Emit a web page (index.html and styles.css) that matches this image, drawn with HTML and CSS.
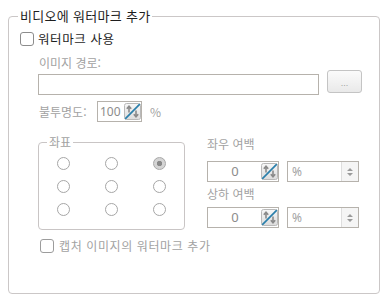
FILE: index.html
```html
<!DOCTYPE html>
<html lang="ko">
<head>
<meta charset="utf-8">
<link rel="stylesheet" href="styles.css">
</head>
<body>
<fieldset class="group">
  <legend class="group-title">비디오에 워터마크 추가</legend>
  <div class="check-row top">
    <span class="checkbox"></span>
    <span class="check-label dark">워터마크 사용</span>
  </div>
  <div class="indent">
    <div class="caption path-caption">이미지 경로:</div>
    <div class="path-row">
      <div class="textbox"></div>
      <div class="btn">...</div>
    </div>
    <div class="opacity-row">
      <span class="caption opacity-caption">불투명도:</span>
      <div class="spin narrow">
        <span class="val left">100</span>
        <svg class="spin-icon" width="17" height="17" viewBox="0 0 17 17">
          <defs><linearGradient id="g1" x1="0" y1="0" x2="0" y2="1"><stop offset="0" stop-color="#f7f7f7"/><stop offset="1" stop-color="#dcdcdc"/></linearGradient></defs>
          <rect x="0.5" y="0.5" width="16" height="16" rx="2" fill="url(#g1)" stroke="#b9b9b9"/>
          <path d="M5 9.5V3.5M2.8 5.8L5 3.3L7.2 5.8" fill="none" stroke="#8a8a8a" stroke-width="1.6"/>
          <path d="M12 7.5V13.5M9.8 11.2L12 13.7L14.2 11.2" fill="none" stroke="#8a8a8a" stroke-width="1.6"/>
          <path d="M1.2 15.8L15.8 1.2" stroke="#2a7fab" stroke-width="1.7"/>
        </svg>
      </div>
      <span class="caption pct">%</span>
    </div>
    <div class="pos-row">
      <fieldset class="coords">
        <legend class="coords-title">좌표</legend>
        <div class="grid">
          <span class="radio"></span><span class="radio"></span><span class="radio checked"></span>
          <span class="radio"></span><span class="radio"></span><span class="radio"></span>
          <span class="radio"></span><span class="radio"></span><span class="radio"></span>
        </div>
      </fieldset>
      <div class="margins">
        <div class="caption m-caption first">좌우 여백</div>
        <div class="m-row first-row">
          <div class="spin wide">
            <span class="val center">0</span>
            <svg class="spin-icon" width="17" height="17" viewBox="0 0 17 17">
              <defs><linearGradient id="g2" x1="0" y1="0" x2="0" y2="1"><stop offset="0" stop-color="#f7f7f7"/><stop offset="1" stop-color="#dcdcdc"/></linearGradient></defs>
              <rect x="0.5" y="0.5" width="16" height="16" rx="2" fill="url(#g2)" stroke="#b9b9b9"/>
              <path d="M5 9.5V3.5M2.8 5.8L5 3.3L7.2 5.8" fill="none" stroke="#8a8a8a" stroke-width="1.6"/>
              <path d="M12 7.5V13.5M9.8 11.2L12 13.7L14.2 11.2" fill="none" stroke="#8a8a8a" stroke-width="1.6"/>
              <path d="M1.2 15.8L15.8 1.2" stroke="#2a7fab" stroke-width="1.7"/>
            </svg>
          </div>
          <div class="combo">
            <span class="combo-text">%</span>
            <span class="combo-btn">
              <svg width="8" height="10" viewBox="0 0 8 10"><path d="M1 4L4 1L7 4Z M1 6L4 9L7 6Z" fill="#9a9a9a"/></svg>
            </span>
          </div>
        </div>
        <div class="caption m-caption second">상하 여백</div>
        <div class="m-row second-row">
          <div class="spin wide">
            <span class="val center">0</span>
            <svg class="spin-icon" width="17" height="17" viewBox="0 0 17 17">
              <defs><linearGradient id="g3" x1="0" y1="0" x2="0" y2="1"><stop offset="0" stop-color="#f7f7f7"/><stop offset="1" stop-color="#dcdcdc"/></linearGradient></defs>
              <rect x="0.5" y="0.5" width="16" height="16" rx="2" fill="url(#g3)" stroke="#b9b9b9"/>
              <path d="M5 9.5V3.5M2.8 5.8L5 3.3L7.2 5.8" fill="none" stroke="#8a8a8a" stroke-width="1.6"/>
              <path d="M12 7.5V13.5M9.8 11.2L12 13.7L14.2 11.2" fill="none" stroke="#8a8a8a" stroke-width="1.6"/>
              <path d="M1.2 15.8L15.8 1.2" stroke="#2a7fab" stroke-width="1.7"/>
            </svg>
          </div>
          <div class="combo">
            <span class="combo-text">%</span>
            <span class="combo-btn">
              <svg width="8" height="10" viewBox="0 0 8 10"><path d="M1 4L4 1L7 4Z M1 6L4 9L7 6Z" fill="#9a9a9a"/></svg>
            </span>
          </div>
        </div>
      </div>
    </div>
  </div>
  <div class="check-row bottom">
    <span class="checkbox light"></span>
    <span class="check-label gray">캡처 이미지의 워터마크 추가</span>
  </div>
</fieldset>
</body>
</html>
```

FILE: styles.css
```css
html, body {
  margin: 0;
  padding: 0;
  background: #ffffff;
}
body {
  width: 387px;
  height: 302px;
  padding: 8px 0 0 8px;
  box-sizing: border-box;
  font-family: "Noto Sans CJK KR", "Noto Sans", sans-serif;
  font-size: 12px;
  overflow: hidden;
}
.group {
  margin: 0;
  width: 372px;
  height: 286px;
  box-sizing: border-box;
  border: 1px solid #cbc7c7;
  border-radius: 4px;
  padding: 0 0 0 11px;
  min-width: 0;
}
.group-title {
  font-size: 13px;
  line-height: 16px;
  color: #1e1e1e;
  padding: 0 2px;
  margin-left: -2px;
  letter-spacing: 0.3px;
}
.check-row {
  display: flex;
  align-items: center;
  height: 14px;
}
.check-row.top {
  margin-top: 8px;
}
.check-row.bottom {
  margin-top: 9px;
  margin-left: 20px;
}
.checkbox {
  width: 14px;
  height: 14px;
  box-sizing: border-box;
  border: 1px solid #8c8c8c;
  border-radius: 3px;
  background: #ffffff;
  flex: none;
}
.checkbox.light {
  border-color: #9c9c9c;
}
.check-label {
  margin-left: 5px;
  line-height: 14px;
  font-size: 12px;
  letter-spacing: 0.6px;
}
.check-label.dark {
  color: #1e1e1e;
  font-size: 12.5px;
  margin-left: 4px;
}
.check-label.gray {
  color: #a2a2a2;
}
.indent {
  margin-left: 18px;
}
.caption {
  color: #a2a2a2;
  font-size: 12px;
  line-height: 14px;
}
.path-caption {
  margin-top: 10px;
  height: 14px;
  padding-left: 1px;
}
.path-row {
  display: flex;
  align-items: flex-start;
}
.textbox {
  margin-top: 4px;
  width: 281px;
  height: 21px;
  box-sizing: border-box;
  border: 1px solid #b6b2ac;
  background: #ffffff;
}
.btn {
  margin-left: 8px;
  width: 35px;
  height: 23px;
  box-sizing: border-box;
  border: 1px solid #c4c4c4;
  border-radius: 3px;
  background: linear-gradient(#fbfbfb, #e9e9e9);
  color: #a0a0a0;
  font-family: "Liberation Sans", sans-serif;
  font-size: 9px;
  line-height: 21px;
  text-align: center;
  padding-top: 2px;
}
.opacity-row {
  display: flex;
  align-items: center;
  margin-top: 6px;
  height: 21px;
}
.opacity-caption {
  width: 59px;
  padding-left: 1px;
  box-sizing: border-box;
}
.pct {
  margin-left: 8px;
}
.spin {
  display: flex;
  align-items: center;
  height: 21px;
  box-sizing: border-box;
  border: 1px solid #b6b2ac;
  background: #ffffff;
}
.spin.narrow {
  width: 45px;
}
.spin.wide {
  width: 72px;
}
.val {
  font-family: "Noto Sans", sans-serif;
  font-size: 12px;
  line-height: 19px;
  color: #8c8c8c;
}
.val.left {
  padding-left: 2px;
}
.val.center {
  flex: 1;
  text-align: center;
  padding-left: 1px;
  font-size: 13px;
}
.spin-icon {
  display: block;
  margin-left: auto;
  margin-right: 0;
  flex: none;
}
.pos-row {
  display: flex;
  align-items: flex-start;
  margin-top: 12px;
}
.coords {
  margin: 0;
  width: 147px;
  box-sizing: border-box;
  border: 1px solid #c9c5c5;
  border-radius: 4px;
  padding: 2px 0 8px 0;
  min-width: 0;
}
.coords-title {
  font-size: 12px;
  line-height: 16px;
  color: #a2a2a2;
  padding: 0 2px;
  margin-left: 8px;
}
.grid {
  display: grid;
  grid-template-columns: 48px 48px 48px;
  grid-template-rows: 23px 23px 23px;
  align-items: center;
  justify-items: center;
}
.radio {
  width: 13px;
  height: 13px;
  box-sizing: border-box;
  border: 1px solid #a6a6a6;
  border-radius: 50%;
  background: #ffffff;
}
.radio.checked {
  border-color: #a8a8a8;
  background: radial-gradient(circle, #8a8a8a 0, #8a8a8a 2.4px, #d4d4d4 3px, #d4d4d4 100%);
}
.margins {
  margin-left: 22px;
  display: flex;
  flex-direction: column;
}
.m-caption {
  line-height: 16px;
  height: 16px;
}
.m-caption.first {
  margin-top: 2px;
}
.m-caption.second {
  margin-top: 4px;
}
.m-row {
  display: flex;
  align-items: center;
}
.m-row.first-row {
  margin-top: 9px;
}
.m-row.second-row {
  margin-top: 5px;
}
.combo {
  margin-left: 8px;
  width: 72px;
  height: 21px;
  box-sizing: border-box;
  border: 1px solid #b6b2ac;
  background: #ffffff;
  display: flex;
  align-items: stretch;
}
.combo-text {
  flex: 1;
  padding-left: 4px;
  color: #a2a2a2;
  font-family: "Noto Sans", sans-serif;
  font-size: 12px;
  line-height: 19px;
}
.combo-btn {
  width: 16px;
  border-left: 1px solid #dedede;
  background: #f5f5f5;
  display: flex;
  align-items: center;
  justify-content: center;
}
.combo-btn svg {
  display: block;
}
```
